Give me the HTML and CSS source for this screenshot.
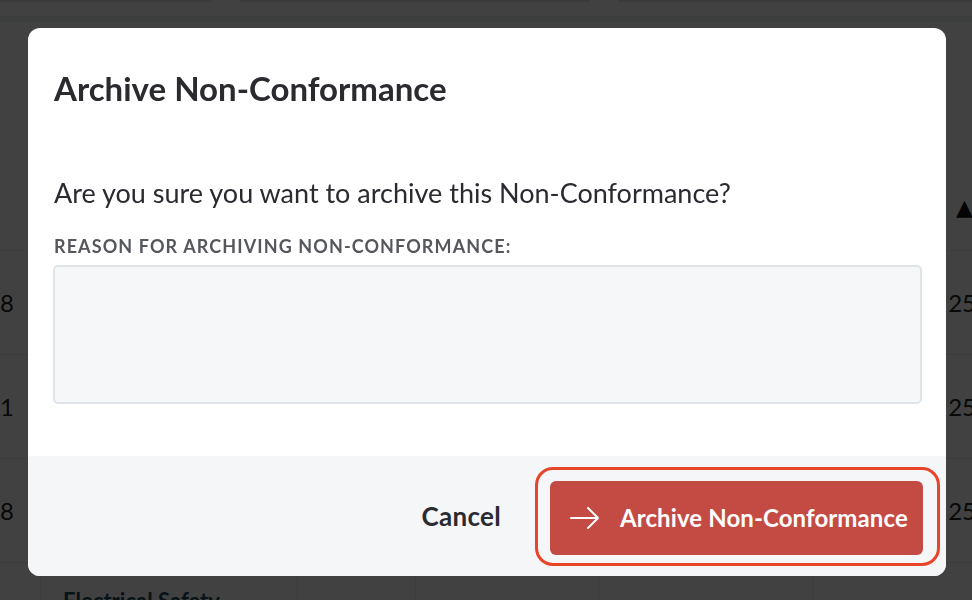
FILE: index.html
```html
<!DOCTYPE html>
<html>
<head>
<meta charset="utf-8">
<link rel="stylesheet" href="styles.css">
</head>
<body>
<div class="page">
  <div class="topbar"><span class="seg s1"></span><span class="seg s2"></span><span class="seg s3"></span></div>
  <div class="subbar"></div>
  <div class="thead"><span class="dot">.</span><span class="sort">▲</span></div>
  <div class="row"><span class="lc">18</span><span class="rc">25</span></div>
  <div class="row"><span class="lc">21</span><span class="rc">25</span></div>
  <div class="row"><span class="lc">18</span><span class="rc">25</span></div>
  <div class="row last"><span class="cell c1">Electrical Safety</span><span class="cell c2"></span><span class="cell c3"></span><span class="cell c4"></span><span class="cell c5"></span></div>
</div>
<div class="overlay"></div>
<div class="modal">
  <div class="modal-body">
    <h2 class="title">Archive Non-Conformance</h2>
    <p class="question">Are you sure you want to archive this Non-Conformance?</p>
    <label class="label">Reason for archiving Non-Conformance:</label>
    <textarea class="reason"></textarea>
  </div>
  <div class="modal-footer">
    <button class="btn-cancel">Cancel</button>
    <div class="btn-wrap">
      <button class="btn-archive">
        <svg class="arrow" width="32" height="24" viewBox="0 0 32 24"><path d="M2 12H29M19 2L29 12L19 22" fill="none" stroke="#fff" stroke-width="2" stroke-linecap="round" stroke-linejoin="round"/></svg>
        <span>Archive Non-Conformance</span>
      </button>
      <span class="highlight"></span>
    </div>
  </div>
</div>
</body>
</html>
```

FILE: styles.css
```css
* { box-sizing: border-box; }
html, body { margin: 0; padding: 0; }
body {
  width: 972px;
  height: 600px;
  overflow: hidden;
  font-family: Lato, "Open Sans", sans-serif;
  background: #fff;
}
.page { width: 972px; height: 600px; overflow: hidden; }
.topbar { height: 2px; display: flex; gap: 28px; background: #fff; }
.seg { display: block; height: 2px; background: #e6e6e6; }
.s1 { width: 212px; }
.s2 { width: 350px; }
.s3 { flex: 1; }
.subbar { height: 20px; background: #fff; border-bottom: 6px solid #eceef0; }
.thead {
  height: 229px;
  border-bottom: 1px solid #f0f0f0;
  display: flex;
  justify-content: space-between;
  padding-top: 170px;
  font-size: 22px;
}
.dot { color: #222; margin-left: -4px; }
.sort { font-family: "DejaVu Sans", sans-serif; font-size: 22px; line-height: 30px; color: #111; margin-right: -1px; margin-top: 1px; }
.row {
  height: 104px;
  border-bottom: 1px solid #e8e8e8;
  display: flex;
  align-items: center;
  justify-content: space-between;
  font-size: 24px;
  color: #222;
}
.lc { margin-left: -14px; }
.rc { margin-right: -4px; }
.row.last { justify-content: flex-start; align-items: flex-start; border: 0; }
.cell { height: 100px; border-left: 1px solid #ececec; }
.c1 { width: 257px; margin-left: 40px; padding: 24px 0 0 22px; font-weight: 700; font-size: 22px; color: #1d4a5c; }
.c2 { width: 118px; }
.c3 { width: 183px; }
.c4 { width: 214px; }
.c5 { width: 160px; }
.overlay {
  position: fixed;
  inset: 0;
  background: rgba(0, 0, 0, 0.745);
}
.modal {
  position: fixed;
  left: 28px;
  top: 28px;
  width: 918px;
  height: 548px;
  background: #fff;
  border-radius: 12px;
  overflow: hidden;
  display: flex;
  flex-direction: column;
}
.modal-body {
  padding: 0 24px 0 25px;
  flex: 1;
  display: flex;
  flex-direction: column;
}
.title {
  margin: 40px 0 0 1px;
  font-size: 33px;
  line-height: 40px;
  font-weight: 700;
  color: #2a2a2f;
}
.question {
  margin: 68px 0 0 1px;
  font-size: 27px;
  line-height: 34px;
  color: #2a2a30;
}
.label {
  margin: 25px 0 0 1px;
  font-size: 18px;
  line-height: 22px;
  font-weight: 700;
  letter-spacing: 1.1px;
  text-transform: uppercase;
  color: #55575d;
}
.reason {
  margin-top: 8px;
  width: 869px;
  height: 139px;
  background: #f6f7f9;
  border: 2px solid #dfe4ea;
  border-radius: 5px;
  resize: none;
  outline: none;
}
.modal-footer {
  height: 120px;
  background: #f5f6f8;
  display: flex;
  align-items: center;
  justify-content: flex-end;
  padding-right: 23px;
}
.btn-cancel {
  border: 0;
  background: transparent;
  font-family: Lato, sans-serif;
  font-size: 26px;
  font-weight: 700;
  color: #2a2a30;
  padding: 0;
  margin-right: 49px;
  letter-spacing: 0.3px;
}
.btn-wrap { position: relative; }
.btn-archive {
  width: 373px;
  height: 74px;
  border: 0;
  border-radius: 6px;
  background: #c44a44;
  color: #fff;
  font-family: Lato, sans-serif;
  font-size: 24px;
  font-weight: 700;
  letter-spacing: 0.1px;
  display: flex;
  align-items: center;
  padding: 0 0 0 19px;
  margin-top: 3px;
}
.arrow { margin-right: 19px; }
.highlight {
  position: absolute;
  left: -15px;
  top: -11px;
  right: -17px;
  bottom: -11px;
  border: 3px solid #e8442a;
  border-radius: 18px;
}
```
